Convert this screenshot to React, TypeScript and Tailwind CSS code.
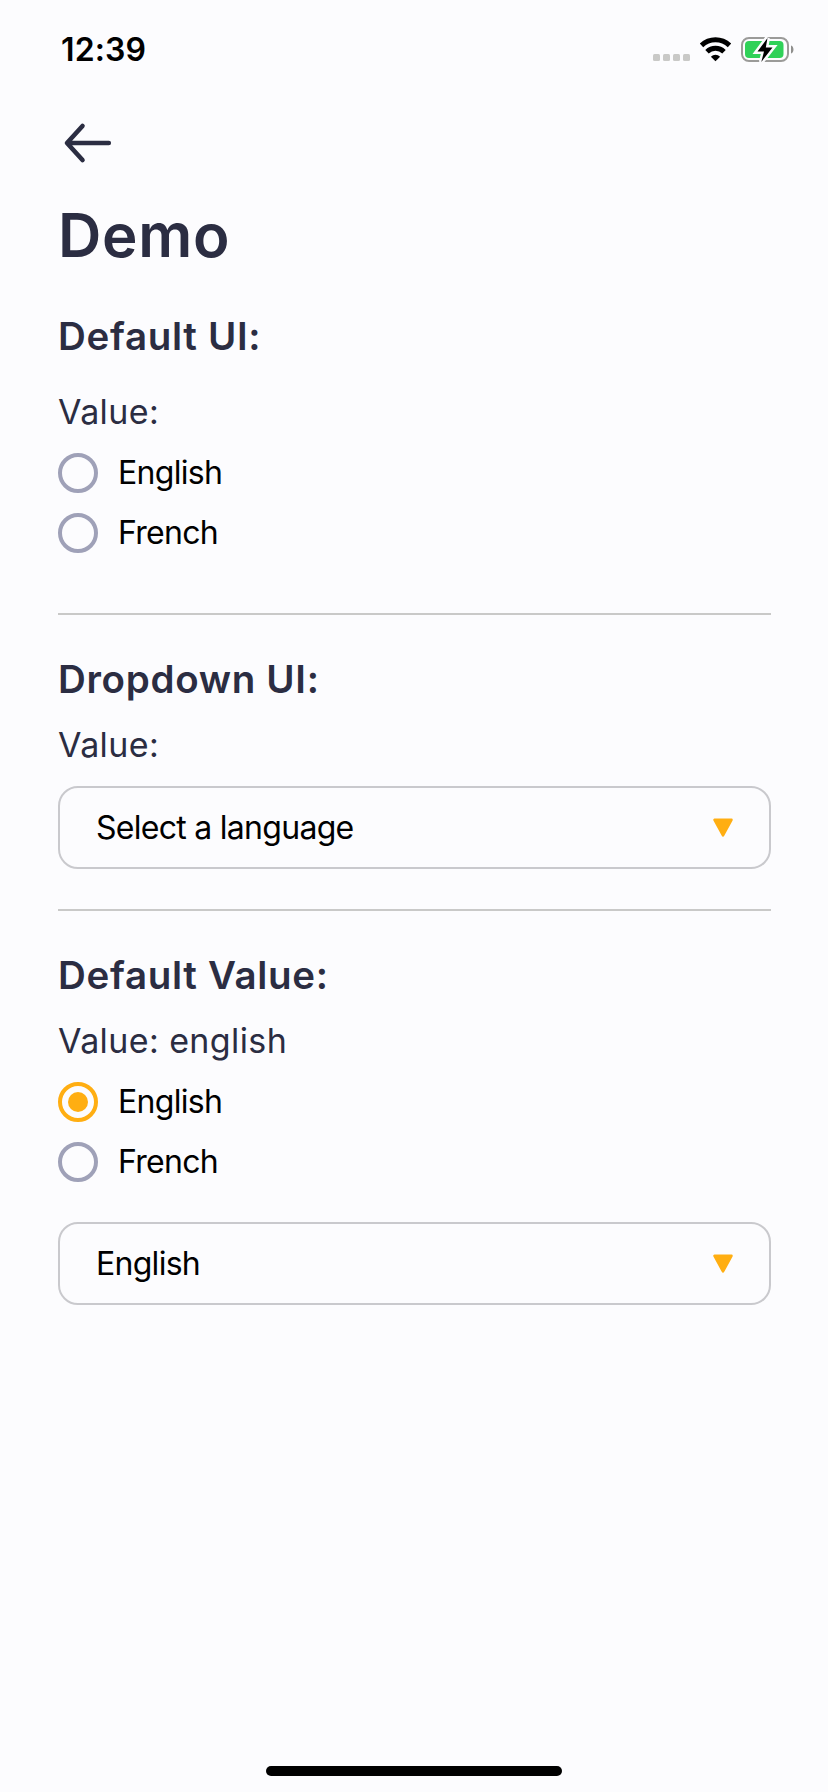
import React from "react";

function StatusBar() {
  return (
    <header className="flex h-[100px] items-start justify-between pt-[30px] pr-[33px] pl-[61px]">
      <span className="font-['Inter',sans-serif] text-[32px] leading-[40px] font-semibold tracking-[0.1px] text-black">
        12:39
      </span>
      <div className="flex items-center">
        <svg width="143" height="40" viewBox="0 0 143 40" aria-hidden="true">
          <g fill="#c9c9c7">
            <rect x="1" y="24" width="7" height="7" rx="1.5" />
            <rect x="11" y="24" width="7" height="7" rx="1.5" />
            <rect x="21" y="24" width="7" height="7" rx="1.5" />
            <rect x="31" y="24" width="7" height="7" rx="1.5" />
          </g>
          <g fill="none" stroke="#000" strokeWidth="5">
            <path d="M49.5 15.3a20.5 20.5 0 0 1 28 0" />
            <path d="M55 21.7a12.3 12.3 0 0 1 17 0" />
          </g>
          <path d="M63.500 31.200l-4.600-4.500a6.600 6.600 0 0 1 9.200 0z" fill="#000" />
          <rect x="90" y="8" width="46" height="23" rx="7" fill="none" stroke="#9b9b99" strokeWidth="2" />
          <path d="M139 15.500c3.300 1 3.300 7 0 8z" fill="#8f8f8d" />
          <rect x="93" y="11" width="38.500" height="17" rx="4" fill="#2fd158" />
          <path
            d="M115.500 8L105.500 21.500h6.500l-2.700 10.500L120.500 17.500h-6.700z"
            fill="#000"
            stroke="#fcfcfe"
            strokeWidth="5"
            paintOrder="stroke"
          />
        </svg>
      </div>
    </header>
  );
}

function BackArrow() {
  return (
    <button type="button" aria-label="Back" className="block h-[44px] w-[54px]">
      <svg width="54" height="44" viewBox="0 0 54 44" fill="none" stroke="#2b2d42" strokeWidth="4.6" strokeLinecap="round" strokeLinejoin="round">
        <path d="M50.800 23H9.500M24.500 6L9 23l15.500 17" />
      </svg>
    </button>
  );
}

function Heading({ children, className }: { children: React.ReactNode; className: string }) {
  return (
    <h2 className={`font-['Inter',sans-serif] text-[38.5px] leading-[48px] font-semibold tracking-[0.68px] whitespace-nowrap text-[#2b2d42] ${className}`}>
      {children}
    </h2>
  );
}

function Value({ children }: { children: React.ReactNode }) {
  return (
    <p className="mb-5 font-['Inter',sans-serif] text-[34px] leading-[42px] tracking-[0.4px] whitespace-pre text-[#2b2d42]">
      {children}
    </p>
  );
}

function Radio({ label, checked = false }: { label: string; checked?: boolean }) {
  return (
    <div className="flex h-10 items-center gap-5">
      <span
        className={`flex size-10 items-center justify-center rounded-full border-4 ${checked ? "border-[#ffae12]" : "border-[#9fa1b8]"}`}
      >
        {checked && <span className="size-5 rounded-full bg-[#ffae12]" />}
      </span>
      <span className="font-['Inter',sans-serif] text-[32px] leading-[40px] tracking-[-0.7px] text-black">{label}</span>
    </div>
  );
}

function Select({ label }: { label: string }) {
  return (
    <div className="flex h-[83px] items-center justify-between rounded-[20px] border-2 border-[#c9c9cd] pr-[35px] pl-[36px]">
      <span className="font-['Inter',sans-serif] text-[32px] leading-[40px] tracking-[-0.72px] text-black">{label}</span>
      <svg width="22" height="22" viewBox="0 0 22 22" aria-hidden="true">
        <path d="M2.500 2.800h17L11 18.500z" fill="#ffae12" stroke="#ffae12" strokeWidth="2.500" strokeLinejoin="round" />
      </svg>
    </div>
  );
}

function Divider() {
  return <hr className="h-[2px] border-0 bg-[#c9c9c8]" />;
}

export default function App() {
  return (
    <div className="flex h-[1792px] w-[828px] flex-col bg-[#fcfcfe]">
      <StatusBar />
      <main className="flex-1 pr-[57px] pl-[58px]">
        <div className="pt-5">
          <BackArrow />
        </div>
        <h1 className="mt-[35px] pb-px font-['Inter',sans-serif] text-[60px] leading-[72px] font-semibold tracking-[0.7px] text-[#2b2d42]">Demo</h1>

        <section className="mt-10">
          <Heading className="mb-[31px]">Default UI:</Heading>
          <Value>Value:</Value>
          <div className="flex flex-col gap-5">
            <Radio label="English" />
            <Radio label="French" />
          </div>
        </section>

        <div className="mt-[60px] mb-10">
          <Divider />
        </div>

        <section>
          <Heading className="mb-[21px]">Dropdown UI:</Heading>
          <Value>Value:</Value>
          <Select label="Select a language" />
        </section>

        <div className="my-10">
          <Divider />
        </div>

        <section>
          <Heading className="mb-[21px]">Default Value:</Heading>
          <Value>Value: english</Value>
          <div className="flex flex-col gap-5">
            <Radio label="English" checked />
            <Radio label="French" />
          </div>
          <div className="mt-10">
            <Select label="English" />
          </div>
        </section>
      </main>
      <footer className="flex justify-center pb-4">
        <div className="h-[10px] w-[296px] rounded-full bg-black" />
      </footer>
    </div>
  );
}
